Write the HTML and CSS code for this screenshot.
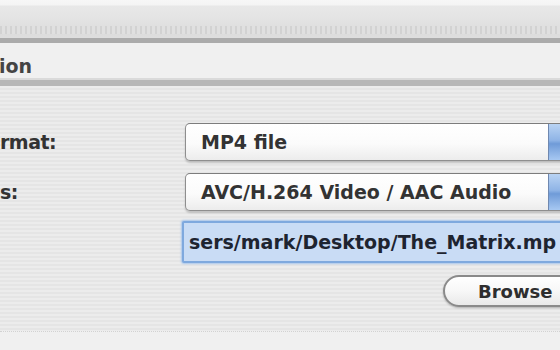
FILE: index.html
```html
<!DOCTYPE html>
<html>
<head>
<meta charset="utf-8">
<link rel="stylesheet" href="styles.css">
</head>
<body>
<div class="window">
  <div class="toolbar"><div class="toolbar-dots"></div></div>
  <div class="tabbar"><span class="tab-label">ion</span></div>
  <div class="content">
    <div class="form">
      <div class="label">rmat:</div>
      <div class="popup"><span class="popup-text">MP4 file</span><span class="popup-arrow"></span></div>
      <div class="label">s:</div>
      <div class="popup"><span class="popup-text">AVC/H.264 Video / AAC Audio</span><span class="popup-arrow"></span></div>
      <div class="label"></div>
      <div class="field">sers/mark/Desktop/The_Matrix.mp</div>
      <div class="label"></div>
      <div class="button-row"><div class="button">Browse</div></div>
    </div>
  </div>
  <div class="footer"></div>
</div>
</body>
</html>
```
FILE: styles.css
```css
html, body {
  margin: 0;
  padding: 0;
  width: 560px;
  height: 350px;
  overflow: hidden;
  background: #ebebeb;
}
.window {
  width: 560px;
  height: 350px;
  overflow: hidden;
  display: flex;
  flex-direction: column;
  font-family: "DejaVu Sans", "Liberation Sans", sans-serif;
  font-size: 19px;
  font-weight: bold;
  color: #333333;
}
.toolbar {
  flex: none;
  height: 38px;
  box-sizing: border-box;
  background: linear-gradient(#f7f7f7 0, #f4f4f4 5px, #e8e8e8 6px, #e3e3e3 20px, #dcdcdc 32px, #dedede 38px);
  display: flex;
  align-items: flex-end;
  padding-bottom: 4px;
}
.toolbar-dots {
  width: 100%;
  height: 8px;
  background: repeating-linear-gradient(90deg, #d2d2d2 0 2px, #e0e0e0 2px 5px);
}
.tabbar {
  flex: none;
  height: 35px;
  border-top: 5px solid #ababab;
  background: #f0f0f0;
  border-bottom: 2px solid #dadada;
  display: flex;
  align-items: flex-end;
}
.tab-label {
  margin-left: -1px;
  line-height: 24px;
  color: #444444;
  font-size: 19px;
}
.content {
  flex: 1;
  border-top: 6px solid #b7b7b7;
  background: repeating-linear-gradient(180deg, #ececec 0 2px, #e5e5e5 2px 4px);
  padding-top: 37px;
}
.form {
  display: grid;
  grid-template-columns: 185px 1fr;
  row-gap: 12px;
  align-items: center;
}
.label {
  color: #333333;
  letter-spacing: -0.5px;
}
.popup {
  height: 36px;
  margin-right: -14px;
  border: 1px solid #8e8e8e;
  border-top-color: #7d7d7d;
  border-radius: 5px 0 0 5px;
  background: linear-gradient(#ffffff 0, #fbfbfb 55%, #ececec 100%);
  box-shadow: 0 2px 2px rgba(0,0,0,0.18);
  display: flex;
  align-items: center;
  overflow: hidden;
}
.popup-text {
  flex: 1;
  padding-left: 15px;
  white-space: nowrap;
}
.popup-arrow {
  width: 24px;
  align-self: stretch;
  border-left: 1px solid #6f88b0;
  background: linear-gradient(#b9d3f3 0, #8fb4e6 45%, #6f9bd8 55%, #a7c8f2 100%);
}
.field {
  margin-left: -3px;
  margin-right: -14px;
  margin-top: -2px;
  height: 38px;
  border: 2px solid #7fa9de;
  border-radius: 2px;
  background: #c9dcf5;
  box-shadow: 0 0 2px 1px #a8c6ec;
  display: flex;
  align-items: center;
  padding-left: 5px;
  white-space: nowrap;
  overflow: hidden;
  color: #1e2430;
}
.button-row {
  display: flex;
  justify-content: flex-end;
  margin-right: -30px;
}
.button {
  width: 147px;
  height: 32px;
  border: 2px solid #8a8a8a;
  border-radius: 16px;
  background: linear-gradient(#ffffff 0, #f7f7f7 50%, #e9e9e9 100%);
  box-shadow: 0 1px 2px rgba(0,0,0,0.25);
  display: flex;
  align-items: center;
  padding-left: 33px;
  box-sizing: border-box;
  font-size: 18px;
  color: #2e2e2e;
}
.footer {
  height: 18px;
  flex: none;
  background: #f0f0f0;
  border-top: 1px dotted #d2d2d2;
}
```
